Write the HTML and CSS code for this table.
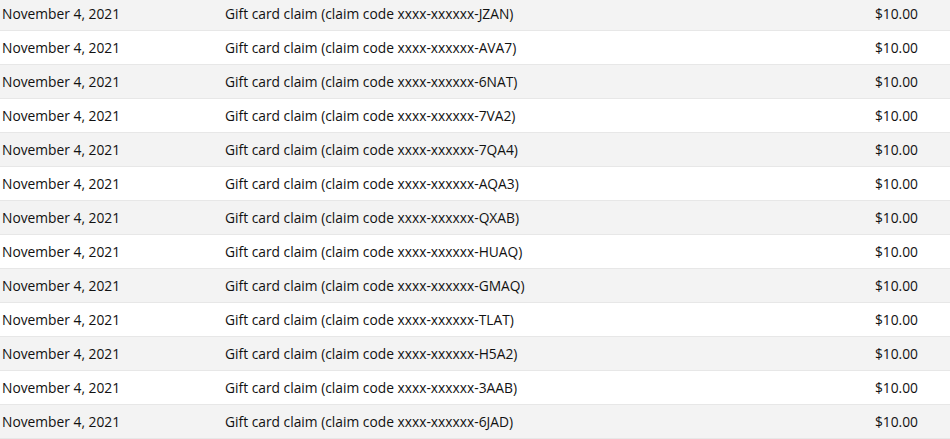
FILE: index.html
```html
<!DOCTYPE html>
<html lang="en">
<head>
    <meta charset="UTF-8">
    <title>Gift card activity</title>
    <link rel="stylesheet" href="styles.css">
</head>
<body>
    <table class="activity">
        <colgroup>
            <col class="col-date">
            <col class="col-desc">
            <col class="col-amount">
        </colgroup>
        <tbody>
            <tr><td class="date">November 4, 2021</td><td class="desc">Gift card claim (claim code xxxx-xxxxxx-JZAN)</td><td class="amount">$10.00</td></tr>
            <tr><td class="date">November 4, 2021</td><td class="desc">Gift card claim (claim code xxxx-xxxxxx-AVA7)</td><td class="amount">$10.00</td></tr>
            <tr><td class="date">November 4, 2021</td><td class="desc">Gift card claim (claim code xxxx-xxxxxx-6NAT)</td><td class="amount">$10.00</td></tr>
            <tr><td class="date">November 4, 2021</td><td class="desc">Gift card claim (claim code xxxx-xxxxxx-7VA2)</td><td class="amount">$10.00</td></tr>
            <tr><td class="date">November 4, 2021</td><td class="desc">Gift card claim (claim code xxxx-xxxxxx-7QA4)</td><td class="amount">$10.00</td></tr>
            <tr><td class="date">November 4, 2021</td><td class="desc">Gift card claim (claim code xxxx-xxxxxx-AQA3)</td><td class="amount">$10.00</td></tr>
            <tr><td class="date">November 4, 2021</td><td class="desc">Gift card claim (claim code xxxx-xxxxxx-QXAB)</td><td class="amount">$10.00</td></tr>
            <tr><td class="date">November 4, 2021</td><td class="desc">Gift card claim (claim code xxxx-xxxxxx-HUAQ)</td><td class="amount">$10.00</td></tr>
            <tr><td class="date">November 4, 2021</td><td class="desc">Gift card claim (claim code xxxx-xxxxxx-GMAQ)</td><td class="amount">$10.00</td></tr>
            <tr><td class="date">November 4, 2021</td><td class="desc">Gift card claim (claim code xxxx-xxxxxx-TLAT)</td><td class="amount">$10.00</td></tr>
            <tr><td class="date">November 4, 2021</td><td class="desc">Gift card claim (claim code xxxx-xxxxxx-H5A2)</td><td class="amount">$10.00</td></tr>
            <tr><td class="date">November 4, 2021</td><td class="desc">Gift card claim (claim code xxxx-xxxxxx-3AAB)</td><td class="amount">$10.00</td></tr>
            <tr><td class="date">November 4, 2021</td><td class="desc">Gift card claim (claim code xxxx-xxxxxx-6JAD)</td><td class="amount">$10.00</td></tr>
        </tbody>
    </table>
</body>
</html>
```
FILE: styles.css
```css
/* Reset */
body, html {
    margin: 0;
    padding: 0;
    background: #fff;
    font-family: "Open Sans", "Noto Sans", Arial, sans-serif;
    color: #111;
    overflow: hidden;
}

.activity {
    width: 950px;
    table-layout: fixed;
    border-collapse: separate;
    border-spacing: 0;
    margin-top: -3px;
    font-size: 13.8px;
}

.col-date {
    width: 225px;
}

.col-amount {
    width: 200px;
}

.activity tr:nth-child(odd) td {
    background-color: #f3f3f3;
}

.activity td {
    height: 34px;
    padding: 0;
    vertical-align: middle;
    border-bottom: 1px solid #e7e7e7;
    box-sizing: border-box;
    white-space: nowrap;
}

.activity td.date {
    padding-left: 2px;
}

.activity td.amount {
    text-align: right;
    padding-right: 32px;
}
```
